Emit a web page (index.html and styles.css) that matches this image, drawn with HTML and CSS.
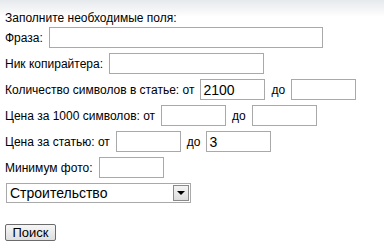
FILE: index.html
```html
<!DOCTYPE html>
<html>
<head>
<meta charset="utf-8">
<link rel="stylesheet" href="styles.css">
</head>
<body>
<form class="search-form">
  <div class="title">Заполните необходимые поля:</div>
  <div class="row"><span class="lbl">Фраза:</span><input class="field field-phrase" type="text"></div>
  <div class="row"><span class="lbl">Ник копирайтера:</span><input class="field field-nick" type="text"></div>
  <div class="row"><span class="lbl">Количество символов в статье: от</span><input class="field field-num" type="text" value="2100"><span class="lbl">до</span><input class="field field-num" type="text"></div>
  <div class="row"><span class="lbl">Цена за 1000 символов: от</span><input class="field field-num" type="text"><span class="lbl">до</span><input class="field field-num" type="text"></div>
  <div class="row"><span class="lbl">Цена за статью: от</span><input class="field field-num" type="text"><span class="lbl">до</span><input class="field field-num" type="text" value="3"></div>
  <div class="row"><span class="lbl">Минимум фото:</span><input class="field field-num" type="text"></div>
  <div class="select-box">
    <span class="select-text">Строительство</span>
    <span class="select-btn"><span class="tri"></span></span>
  </div>
  <div class="actions"><button class="btn" type="button">Поиск</button></div>
</form>
</body>
</html>
```
FILE: styles.css
```css
html, body {
  margin: 0;
  padding: 0;
  background: #fff;
}
body {
  width: 384px;
  height: 249px;
  background: linear-gradient(to bottom, #e6e9ec 0px, #f3f4f6 9px, #ffffff 17px);
  font-family: "Liberation Sans", Arial, sans-serif;
  font-size: 12px;
  color: #000;
}
.search-form {
  padding: 11px 0 0 5px;
}
.title {
  line-height: 14px;
  height: 16px;
}
.row {
  display: flex;
  align-items: center;
  gap: 6px;
  height: 21px;
  margin-bottom: 5px;
}
.lbl {
  white-space: nowrap;
}
.field {
  box-sizing: border-box;
  height: 21px;
  margin: 0;
  padding: 1px 2px;
  border: 1px solid #a9a9a9;
  font-family: "Liberation Sans", Arial, sans-serif;
  font-size: 14px;
  color: #000;
  background: #fff;
  outline: none;
}
.field-phrase { width: 274px; }
.field-nick { width: 155px; }
.field-num { width: 65px; }
.select-box {
  box-sizing: border-box;
  display: flex;
  align-items: stretch;
  width: 185px;
  height: 20px;
  margin: 0 0 0 1px;
  border: 1px solid #a9a9a9;
  background: #fff;
}
.select-text {
  flex: 1;
  padding-left: 3px;
  font-size: 14px;
  line-height: 18px;
}
.select-btn {
  box-sizing: border-box;
  width: 16px;
  border: 1px solid #8a8a8a;
  margin: 1px;
  background: linear-gradient(to bottom, #f4f4f4, #dcdcdc);
  display: flex;
  align-items: center;
  justify-content: center;
}
.tri {
  width: 0;
  height: 0;
  border-left: 4px solid transparent;
  border-right: 4px solid transparent;
  border-top: 4px solid #000;
}
.actions {
  margin-top: 21px;
}
.btn {
  box-sizing: border-box;
  width: 51px;
  height: 17px;
  padding: 0;
  margin: 0;
  font-family: "Liberation Sans", Arial, sans-serif;
  font-size: 13px;
  line-height: 13px;
  color: #000;
  border: 1px solid #6b6b6b;
  border-radius: 2px;
  background: linear-gradient(to bottom, #f6f6f6, #dedede);
}
```
